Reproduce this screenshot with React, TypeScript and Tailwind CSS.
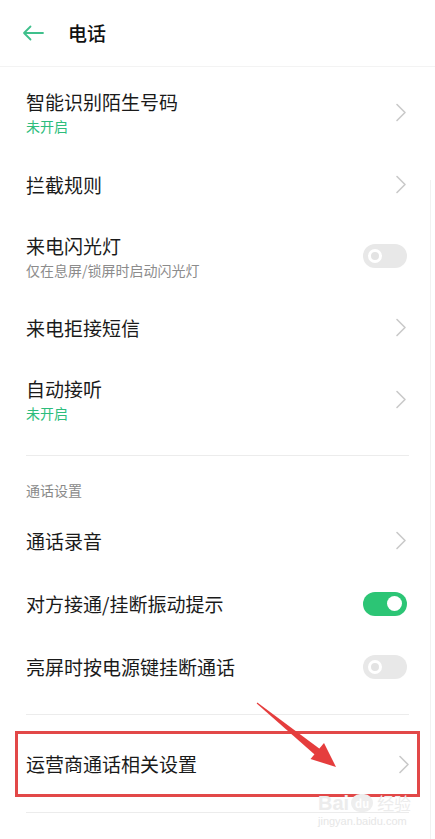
import React from 'react';

const font = { fontFamily: '"Noto Sans CJK SC", "Noto Sans", sans-serif' };

const Chevron = () => (
  <svg width="12" height="19" viewBox="0 0 12 19" fill="none" className="shrink-0">
    <path d="M2 1.5 L10 9.5 L2 17.5" stroke="#c9c9c9" strokeWidth="1.6" strokeLinecap="round" strokeLinejoin="round" />
  </svg>
);

const Toggle = ({ on }: { on: boolean }) =>
  on ? (
    <div className="w-[44px] h-[24px] rounded-full bg-[#2cc575] flex items-center justify-end pr-[5px] shrink-0">
      <div className="w-[15px] h-[15px] rounded-full bg-white" />
    </div>
  ) : (
    <div className="w-[44px] h-[24px] rounded-full bg-[#e8e8e8] flex items-center pl-[5px] shrink-0">
      <div className="w-[14px] h-[14px] rounded-full border-[3px] border-white bg-[#e3e3e3]" />
    </div>
  );

interface RowProps {
  title: string;
  sub?: string;
  subGreen?: boolean;
  right: React.ReactNode;
  h: string;
}

const Row = ({ title, sub, subGreen, right, h }: RowProps) => (
  <div className={`flex items-center justify-between pl-[26px] pr-[28px] ${h}`}>
    <div className="flex flex-col gap-[1px]">
      <span className="text-[19px] leading-[26px] text-[#1a1a1a]">{title}</span>
      {sub && (
        <span className={`text-[14px] leading-[20px] ${subGreen ? 'text-[#2dbd7c]' : 'text-[#8c8c8c]'}`}>{sub}</span>
      )}
    </div>
    {right}
  </div>
);

export default function App() {
  return (
    <div className="relative w-[435px] h-[839px] bg-white overflow-hidden" style={font}>
      {/* header */}
      <div className="h-[67px] flex items-center pl-[22px] border-b border-[#f3f3f3]">
        <svg width="22" height="16" viewBox="0 0 22 16" fill="none">
          <path d="M21 8 H2 M8.5 1.5 L2 8 L8.5 14.5" stroke="#3fc08c" strokeWidth="1.8" strokeLinecap="round" strokeLinejoin="round" />
        </svg>
        <span className="ml-[24px] text-[19px] font-medium text-[#111]">电话</span>
      </div>

      <Row title="智能识别陌生号码" sub="未开启" subGreen right={<Chevron />} h="h-[90px]" />
      <Row title="拦截规则" right={<Chevron />} h="h-[55px]" />
      <Row title="来电闪光灯" sub="仅在息屏/锁屏时启动闪光灯" right={<Toggle on={false} />} h="h-[88px]" />
      <Row title="来电拒接短信" right={<Chevron />} h="h-[55px]" />
      <Row title="自动接听" sub="未开启" subGreen right={<Chevron />} h="h-[89px]" />

      <div className="mt-[11px] mx-[26px] border-t border-[#ececec]" />

      <div className="pl-[26px] pt-[25px] pb-[10px] text-[14px] leading-[18px] text-[#8a8a8a]">通话设置</div>

      <Row title="通话录音" right={<Chevron />} h="h-[63px]" />
      <Row title="对方接通/挂断振动提示" right={<Toggle on />} h="h-[63px]" />
      <Row title="亮屏时按电源键挂断通话" right={<Toggle on={false} />} h="h-[63px]" />

      <div className="mt-[16px] mx-[26px] border-t border-[#ececec]" />

      <div className="mt-[16px] mx-[15px] h-[66px] border-[3px] border-[#e24848] flex items-center justify-between pl-[8px] pr-[7px]">
        <span className="text-[19px] leading-[26px] text-[#1a1a1a]">运营商通话相关设置</span>
        <Chevron />
      </div>

      <div className="mt-[15px] mx-[26px] border-t border-[#ececec]" />

      {/* faint scroll edge */}
      <div className="absolute right-[4px] top-[180px] bottom-0 w-px bg-[#f1f1f1]" />

      {/* annotation arrow */}
      <svg className="absolute left-0 top-0 pointer-events-none" width="435" height="839" viewBox="0 0 435 839">
        <polygon points="256.7,703.4 257.3,702.6 319.9,749.1 314.9,754.7" fill="#e53d3d" />
        <polygon points="336,767 310.5,759 324,743" fill="#e53d3d" />
      </svg>

      {/* watermark */}
      <div className="absolute left-[318px] top-[792px] flex flex-col items-start pointer-events-none select-none">
        <div className="flex items-center gap-[2px]">
          <span className="text-[20px] leading-[22px] font-bold text-[#ececec]" style={{ fontFamily: '"Liberation Sans", sans-serif' }}>Bai</span>
          <span className="w-[22px] h-[18px] rounded-full bg-[#eeeeee] text-[11px] leading-[18px] text-white text-center font-bold">du</span>
          <span className="ml-[2px] text-[17px] leading-[22px] text-[#ececec]">经验</span>
        </div>
        <span className="text-[11px] leading-[14px] text-[#e6e6e6]" style={{ fontFamily: '"Liberation Sans", sans-serif' }}>jingyan.baidu.com</span>
      </div>
    </div>
  );
}
